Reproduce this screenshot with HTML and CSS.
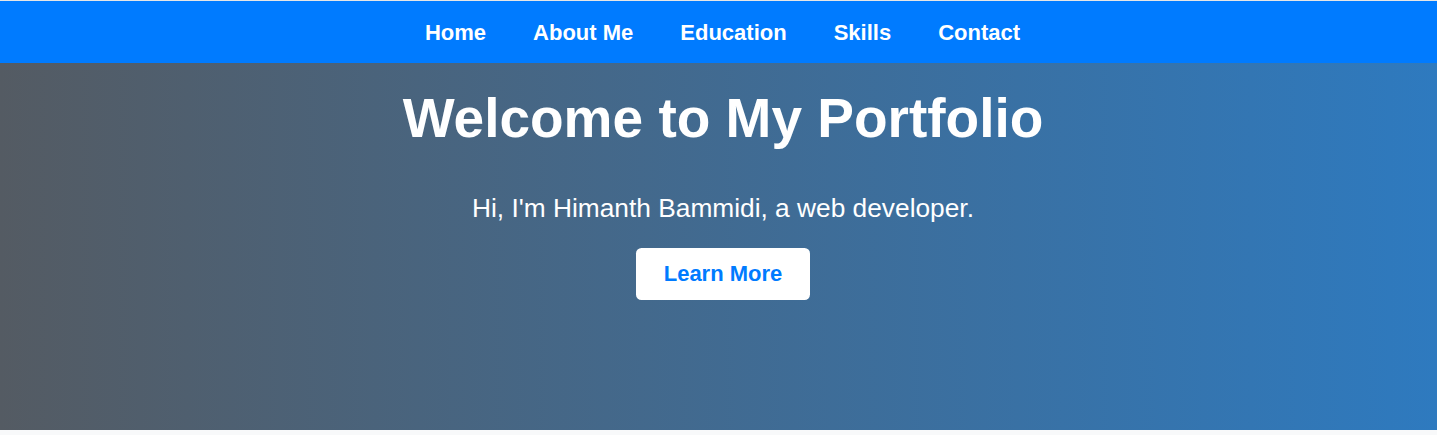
FILE: index.html
```html
<!DOCTYPE html>
<html lang="en">
<head>
<meta charset="utf-8">
<title>My Portfolio</title>
<link rel="stylesheet" href="styles.css">
</head>
<body>
<nav class="navbar">
  <ul class="nav-list">
    <li><a href="#home">Home</a></li>
    <li><a href="#about">About Me</a></li>
    <li><a href="#education">Education</a></li>
    <li><a href="#skills">Skills</a></li>
    <li><a href="#contact">Contact</a></li>
  </ul>
</nav>
<header class="hero">
  <h1 class="hero-title">Welcome to My Portfolio</h1>
  <p class="hero-text">Hi, I'm Himanth Bammidi, a web developer.</p>
  <a class="hero-btn" href="#about">Learn More</a>
</header>
</body>
</html>
```

FILE: styles.css
```css
html, body {
  margin: 0;
  padding: 0;
}
body {
  background: #f8f9fa;
  font-family: "Liberation Sans", Arial, sans-serif;
  border-top: 1px solid #e6e6e6;
}
.navbar {
  background: #007bff;
  height: 62px;
  box-sizing: border-box;
  display: flex;
  align-items: center;
  justify-content: center;
  padding-left: 8px;
  padding-top: 2px;
}
.nav-list {
  list-style: none;
  margin: 0;
  padding: 0;
  display: flex;
}
.nav-list a {
  display: block;
  color: #fff;
  text-decoration: none;
  font-weight: bold;
  font-size: 22px;
  margin: 0 23.5px;
}
.hero {
  height: 367px;
  box-sizing: border-box;
  background: linear-gradient(to right, #545b63, #2e7abf);
  display: flex;
  flex-direction: column;
  align-items: center;
  padding-top: 23px;
  padding-left: 9px;
  color: #fff;
}
.hero-title {
  margin: 0;
  font-size: 55px;
  font-weight: bold;
}
.hero-text {
  margin: 43px 0 24px;
  font-size: 26.3px;
}
.hero-btn {
  display: inline-block;
  background: #fff;
  color: #007bff;
  text-decoration: none;
  font-weight: bold;
  font-size: 22px;
  padding: 13.2px 27.5px;
  border-radius: 5.5px;
}
```
